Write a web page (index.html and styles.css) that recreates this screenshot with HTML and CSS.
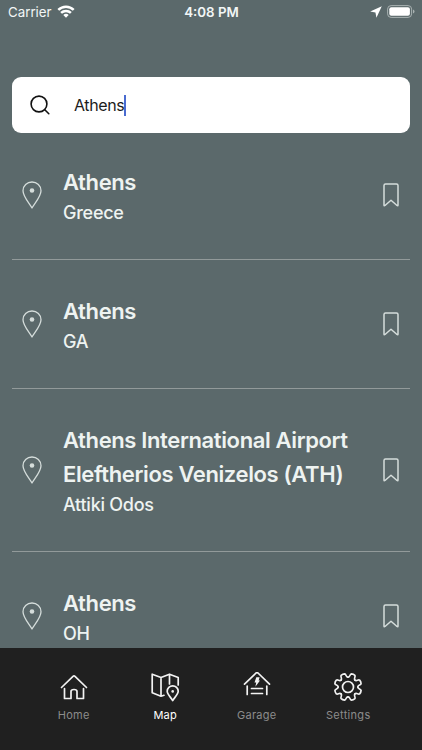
FILE: index.html
```
<!DOCTYPE html>
<html lang="en">
<head>
  <meta charset="UTF-8">
  <meta name="viewport" content="width=device-width, initial-scale=1.0">
  <title>Map search</title>
  <link rel="stylesheet" href="styles.css">
</head>
<body>
  <!-- shared icons -->
  <svg class="sprite" width="0" height="0">
    <symbol id="pin" viewBox="0 0 20 28">
      <path d="M10 27C7.500 22.500 1 15.500 1 9.700A9 8.700 0 0 1 19 9.700C19 15.500 12.500 22.500 10 27Z" fill="none" stroke="currentColor" stroke-width="1.300" stroke-linejoin="round"/>
      <circle cx="10" cy="9.500" r="2.300" fill="currentColor"/>
    </symbol>
    <symbol id="bookmark" viewBox="0 0 16 24">
      <path d="M2.500 1H13.500Q15 1 15 2.500V22Q15 23.300 14 22.500L8 17.200L2 22.500Q1 23.300 1 22V2.500Q1 1 2.500 1Z" fill="none" stroke="currentColor" stroke-width="1.500" stroke-linejoin="round"/>
    </symbol>
  </svg>

  <div class="screen">
    <header class="status-bar">
      <div class="status-left">
        <span>Carrier</span>
        <svg width="18" height="13" viewBox="0 0 18 13" fill="none" stroke="#fff" stroke-width="2.500">
          <path d="M1.300 4.800A11 11 0 0 1 16.700 4.800"/>
          <path d="M4.100 7.900A7 7 0 0 1 13.900 7.900"/>
          <path d="M6.300 10A3.900 3.900 0 0 1 11.700 10L9 12.700Z" fill="#fff" stroke="none"/>
        </svg>
      </div>
      <div class="status-time">4:08 PM</div>
      <div class="status-right">
        <svg width="12" height="12" viewBox="0 0 11 11" fill="#fff"><path d="M10.800 .2L5.900 10.800L5 6L.2 5.100Z"/></svg>
        <svg width="28" height="13" viewBox="0 0 28 13">
          <rect x=".6" y=".6" width="24" height="11.800" rx="3.500" fill="none" stroke="#a9b2b2"/>
          <rect x="2.300" y="2.300" width="20.600" height="8.400" rx="2" fill="#fff"/>
          <path d="M26 4.500Q27.500 5.200 27.500 6.500T26 8.500Z" fill="#a9b2b2"/>
        </svg>
      </div>
    </header>

    <div class="search">
      <svg width="20" height="20" viewBox="0 0 20 20" fill="none" stroke="#111" stroke-width="1.600" stroke-linecap="round">
        <circle cx="9" cy="9" r="7.900"/>
        <path d="M14.800 14.800L18.800 18.700"/>
      </svg>
      <span class="search-text">Athens</span><span class="caret"></span>
    </div>

    <ul class="results">
      <li class="result">
        <svg class="pin"><use href="#pin"/></svg>
        <div class="place">
          <h2>Athens</h2>
          <p>Greece</p>
        </div>
        <svg class="bookmark"><use href="#bookmark"/></svg>
      </li>
      <li class="result">
        <svg class="pin"><use href="#pin"/></svg>
        <div class="place">
          <h2>Athens</h2>
          <p>GA</p>
        </div>
        <svg class="bookmark"><use href="#bookmark"/></svg>
      </li>
      <li class="result">
        <svg class="pin"><use href="#pin"/></svg>
        <div class="place">
          <h2>Athens International Airport<br>Eleftherios Venizelos (ATH)</h2>
          <p>Attiki Odos</p>
        </div>
        <svg class="bookmark"><use href="#bookmark"/></svg>
      </li>
      <li class="result">
        <svg class="pin"><use href="#pin"/></svg>
        <div class="place">
          <h2>Athens</h2>
          <p>OH</p>
        </div>
        <svg class="bookmark"><use href="#bookmark"/></svg>
      </li>
    </ul>

    <nav class="tabs">
      <a class="tab">
        <svg viewBox="0 0 30 30">
          <path d="M2.500 15.500L14 4.300Q15 3.400 16 4.300L27.500 15.500M5.500 16.500V26.500H12V19.500Q12 17.500 15 17.500T18 19.500V26.500H24.500V16.500"/>
        </svg>
        <span>Home</span>
      </a>
      <a class="tab active">
        <svg viewBox="0 0 30 30">
          <path d="M14 23.300L11 24.200L2.200 20.800V2.200L11 5.500L19.500 2.200L28.200 5.500V13M11 5.500V24M19.500 2.500V12"/>
          <path d="M22.700 28.500C21 25.500 17.200 22.500 17.200 19.300A5.500 5.500 0 0 1 28.200 19.300C28.200 22.500 24.400 25.500 22.700 28.500Z"/>
          <circle cx="22.700" cy="19.400" r="1.300" fill="#f2f2f2" stroke="none"/>
        </svg>
        <span>Map</span>
      </a>
      <a class="tab">
        <svg viewBox="0 0 30 30">
          <path d="M2.500 12.200L14 1Q15 .2 16 1L27.500 12.200M5.200 14V22.500M24.800 14V22.500M9.500 16.500H20.500M9.500 21.500H20.500"/>
          <path d="M14.300 5.300H17.600L16.600 8.500H18L13.400 14.800L14.200 10.500H12.500Z" fill="#f2f2f2" stroke="none"/>
        </svg>
        <span>Garage</span>
      </a>
      <a class="tab">
        <svg viewBox="0 0 30 30">
          <!-- one tooth, turned around the centre -->
          <path id="tooth" d="M15 5.200C17.200 5.200 16.600 2.200 18.400 1.900Q20.500 2 21.850 3.370C22.920 4.820 20.370 6.500 21.930 8.070"/>
          <use href="#tooth" transform="rotate(45 15 15)"/>
          <use href="#tooth" transform="rotate(90 15 15)"/>
          <use href="#tooth" transform="rotate(135 15 15)"/>
          <use href="#tooth" transform="rotate(180 15 15)"/>
          <use href="#tooth" transform="rotate(225 15 15)"/>
          <use href="#tooth" transform="rotate(270 15 15)"/>
          <use href="#tooth" transform="rotate(315 15 15)"/>
          <circle cx="15" cy="15" r="5.500"/>
        </svg>
        <span>Settings</span>
      </a>
    </nav>
  </div>
</body>
</html>
```
FILE: styles.css
```
* {
  box-sizing: border-box;
}
body {
  margin: 0;
  font-family: Inter, "Liberation Sans", sans-serif;
  background-color: #5b696b;
}
.sprite {
  display: block;
}
.screen {
  display: flex;
  flex-direction: column;
  width: 100%;
  height: 750px;
  overflow: hidden;
}
.status-bar {
  display: grid;
  grid-template-columns: 1fr auto 1fr;
  align-items: center;
  height: 24px;
  padding: 0 7px 0 8px;
  font-size: 13.3px;
  color: #f2f6f6;
  flex-shrink: 0;
}
.status-left, .status-right {
  display: flex;
  align-items: center;
  gap: 5px;
}
.status-left svg, .status-right svg {
  margin-top: -1px;
}
.status-right {
  justify-content: flex-end;
}
.status-time {
  font-weight: 600;
}
.search {
  display: flex;
  align-items: center;
  flex-shrink: 0;
  height: 56px;
  margin: 53px 12px 0;
  padding: 0 18px;
  border-radius: 9px;
  background-color: #fff;
}
.search-text {
  margin-left: 24px;
  font-size: 16px;
  letter-spacing: -0.4px;
  color: #1c1c1c;
}
.caret {
  width: 2px;
  height: 21px;
  background-color: #4a6bd0;
}
.results {
  flex: 1;
  min-height: 0;
  overflow: hidden;
  margin: 0 12px;
  padding: 0;
  list-style: none;
}
.result {
  display: flex;
  align-items: center;
  padding: 34px 11px 34px 10px;
  border-bottom: 1px solid #929a9a;
  color: #d5dddb;
}
.result:first-child {
  padding-top: 32px;
}
.pin {
  width: 20px;
  height: 28px;
}
.bookmark {
  width: 16px;
  height: 24px;
}
.place {
  flex: 1;
  margin-left: 21px;
  color: #eef3f1;
}
.place h2 {
  margin: 0;
  font-size: 22px;
  font-weight: 600;
  line-height: 34px;
  letter-spacing: -0.37px;
  white-space: nowrap;
}
.place p {
  margin: 0;
  padding-top: 1px;
  font-size: 18px;
  font-weight: 500;
  line-height: 25px;
  letter-spacing: -0.25px;
}
.tabs {
  display: flex;
  flex-shrink: 0;
  height: 102px;
  padding: 24px 28px 0;
  background-color: #202020;
}
.tab {
  display: flex;
  flex: 1;
  flex-direction: column;
  align-items: center;
  gap: 6px;
  font-size: 11px;
  letter-spacing: 0.3px;
  color: #8c8c8c;
}
.tab svg {
  width: 30px;
  height: 30px;
  fill: none;
  stroke: #f2f2f2;
  stroke-width: 1.7;
  stroke-linecap: round;
  stroke-linejoin: round;
}
.tab.active {
  color: #fff;
}
```
